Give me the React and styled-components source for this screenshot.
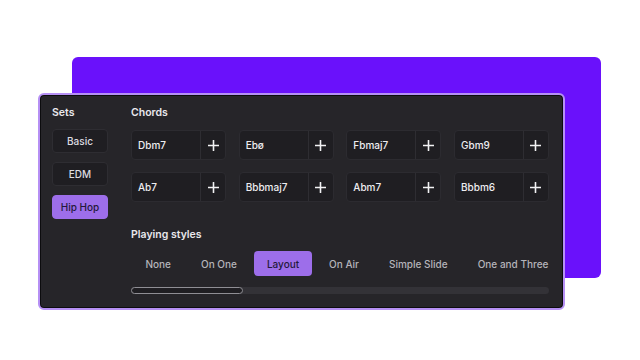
import React, { useState } from 'react';
import styled, { createGlobalStyle, css } from 'styled-components';

const GlobalStyle = createGlobalStyle`
  html, body {
    margin: 0;
    padding: 0;
    background: #ffffff;
    font-family: Inter, "Noto Sans", sans-serif;
  }
`;

const Stage = styled.div`
  position: relative;
  width: 640px;
  height: 360px;
  padding: 93px 0 0 38px;
  box-sizing: border-box;
`;

const Backdrop = styled.div`
  position: absolute;
  left: 72px;
  top: 57px;
  width: 529px;
  height: 221px;
  border-radius: 6px;
  background: #6a11fb;
`;

const Panel = styled.div`
  position: relative;
  width: 527px;
  height: 217px;
  box-sizing: border-box;
  border: 2px solid #b690f4;
  border-radius: 6px;
  background: #262529;
  box-shadow: inset 0 0 0 1px #0c0c0e;
  padding: 10px 15px 0 12px;
  display: flex;
  gap: 23px;
`;

const Column = styled.div`
  display: flex;
  flex-direction: column;
  width: ${p => p.width}px;
`;

const Heading = styled.div`
  font-size: 10.5px;
  font-weight: 600;
  line-height: 16px;
  color: #e9e8ec;
  margin: ${p => p.margin || '0 0 9px'};
`;

const SetList = styled.div`
  display: flex;
  flex-direction: column;
  gap: 9px;
`;

const SetButton = styled.button`
  height: 24px;
  width: 56px;
  border-radius: 4px;
  border: 1px solid #2e2d32;
  background: #1f1e22;
  color: #dedde1;
  font-family: inherit;
  font-size: 10px;
  font-weight: 500;
  padding: 0;
  cursor: pointer;
  ${p =>
    p.active &&
    css`
      background: #9d6eea;
      border-color: #9d6eea;
      color: #24193a;
    `}
`;

const ChordGrid = styled.div`
  display: grid;
  grid-template-columns: repeat(4, 95px);
  column-gap: 12.66px;
  row-gap: 12px;
`;

const Chord = styled.div`
  display: flex;
  height: 30px;
  box-sizing: border-box;
  border: 1px solid #2c2b30;
  border-radius: 4px;
  background: #1f1e22;
  overflow: hidden;
`;

const ChordName = styled.div`
  flex: 1;
  display: flex;
  align-items: center;
  padding-left: 6px;
  font-size: 10px;
  font-weight: 500;
  color: #eeedf1;
  border-right: 1px solid #2e2d32;
`;

const AddButton = styled.button`
  width: 24px;
  border: 0;
  padding: 0;
  background: transparent;
  display: flex;
  align-items: center;
  justify-content: center;
  cursor: pointer;
`;

const StyleRow = styled.div`
  display: flex;
  gap: 5px;
  padding-left: 2px;
  height: 25px;
`;

const StyleTab = styled.button`
  height: 25px;
  padding: 0 12.5px;
  border: 0;
  border-radius: 4px;
  background: transparent;
  color: #b5b4ba;
  font-family: inherit;
  font-size: 10px;
  font-weight: 500;
  cursor: pointer;
  white-space: nowrap;
  ${p =>
    p.active &&
    css`
      background: #9d6eea;
      color: #24193a;
    `}
`;

const Track = styled.div`
  margin-top: 11px;
  height: 7px;
  border-radius: 4px;
  background: #333237;
`;

const Thumb = styled.div`
  height: 7px;
  box-sizing: border-box;
  border: 1.5px solid #8f8e94;
  border-radius: 4px;
  background: #1f1e22;
`;

const Plus = () => (
  <svg width="11" height="11" viewBox="0 0 11 11">
    <path d="M5.5 0.5v10M0.5 5.5h10" stroke="#f2f2f4" strokeWidth="1.6" strokeLinecap="round" />
  </svg>
);

const sets = ['Basic', 'EDM', 'Hip Hop'];
const chords = ['Dbm7', 'Ebø', 'Fbmaj7', 'Gbm9', 'Ab7', 'Bbbmaj7', 'Abm7', 'Bbbm6'];
const styles = ['None', 'On One', 'Layout', 'On Air', 'Simple Slide', 'One and Three'];

export default function App() {
  const [activeSet, setActiveSet] = useState('Hip Hop');
  const [activeStyle, setActiveStyle] = useState('Layout');

  return (
    <Stage>
      <GlobalStyle />
      <Backdrop />
      <Panel>
        <Column width={56}>
          <Heading margin="0 0 8px">Sets</Heading>
          <SetList>
            {sets.map(s => (
              <SetButton key={s} active={activeSet === s} onClick={() => setActiveSet(s)}>
                {s}
              </SetButton>
            ))}
          </SetList>
        </Column>
        <Column width={418}>
          <Heading>Chords</Heading>
          <ChordGrid>
            {chords.map(c => (
              <Chord key={c}>
                <ChordName>{c}</ChordName>
                <AddButton>
                  <Plus />
                </AddButton>
              </Chord>
            ))}
          </ChordGrid>
          <Heading margin="25px 0 8px">Playing styles</Heading>
          <StyleRow>
            {styles.map(s => (
              <StyleTab key={s} active={activeStyle === s} onClick={() => setActiveStyle(s)}>
                {s}
              </StyleTab>
            ))}
          </StyleRow>
          <Track>
            <Thumb style={{ width: 112 }} />
          </Track>
        </Column>
      </Panel>
    </Stage>
  );
}
